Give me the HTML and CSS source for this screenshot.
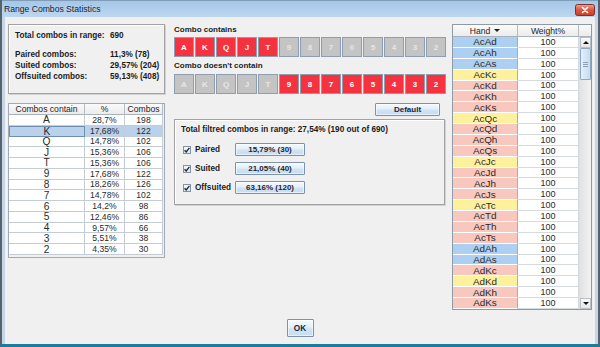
FILE: index.html
```html
<!DOCTYPE html>
<html>
<head>
<meta charset="utf-8">
<title>Range Combos Statistics</title>
<link rel="stylesheet" href="styles.css">
</head>
<body>
<div class="window">
  <div class="titlebar">
    <span class="title">Range Combos Statistics</span>
    <span class="close">
      <svg width="20" height="12" viewBox="0 0 20 12">
        <defs>
          <linearGradient id="cg" x1="0" y1="0" x2="0" y2="1">
            <stop offset="0" stop-color="#eca394"/>
            <stop offset="0.45" stop-color="#dc5a44"/>
            <stop offset="1" stop-color="#cc3e2a"/>
          </linearGradient>
        </defs>
        <rect x="0.5" y="0.5" width="19" height="11" rx="2" fill="url(#cg)" stroke="#80302a"/>
        <path d="M7.5 3.5 L12.5 8.5 M12.5 3.5 L7.5 8.5" stroke="#fff" stroke-width="1.6" stroke-linecap="round"/>
      </svg>
    </span>
  </div>
  <div class="client">
    <div class="main">
      <div class="col-left">
        <div class="stats">
          <div class="srow first"><span class="sk">Total combos in range:</span><span class="sv">690</span></div>
          <div class="srow"><span class="sk">Paired combos:</span><span class="sv">11,3% (78)</span></div>
          <div class="srow"><span class="sk">Suited combos:</span><span class="sv">29,57% (204)</span></div>
          <div class="srow"><span class="sk">Offsuited combos:</span><span class="sv">59,13% (408)</span></div>
        </div>
        <div class="ltable">
          <div class="lgrid">
            <div class="lh">Combos contain</div><div class="lh">%</div><div class="lh">Combos</div>
            <div class="lc rank">A</div><div class="lc">28,7%</div><div class="lc">198</div>
            <div class="lc rank sel focus">K</div><div class="lc sel">17,68%</div><div class="lc sel">122</div>
            <div class="lc rank">Q</div><div class="lc">14,78%</div><div class="lc">102</div>
            <div class="lc rank">J</div><div class="lc">15,36%</div><div class="lc">106</div>
            <div class="lc rank">T</div><div class="lc">15,36%</div><div class="lc">106</div>
            <div class="lc rank">9</div><div class="lc">17,68%</div><div class="lc">122</div>
            <div class="lc rank">8</div><div class="lc">18,26%</div><div class="lc">126</div>
            <div class="lc rank">7</div><div class="lc">14,78%</div><div class="lc">102</div>
            <div class="lc rank">6</div><div class="lc">14,2%</div><div class="lc">98</div>
            <div class="lc rank">5</div><div class="lc">12,46%</div><div class="lc">86</div>
            <div class="lc rank">4</div><div class="lc">9,57%</div><div class="lc">66</div>
            <div class="lc rank">3</div><div class="lc">5,51%</div><div class="lc">38</div>
            <div class="lc rank">2</div><div class="lc">4,35%</div><div class="lc">30</div>
          </div>
        </div>
      </div>

      <div class="col-mid">
        <div class="lbl first">Combo contains</div>
        <div class="cards">
          <span class="card on">A</span><span class="card on">K</span><span class="card on">Q</span><span class="card on">J</span><span class="card on">T</span><span class="card">9</span><span class="card">8</span><span class="card">7</span><span class="card">6</span><span class="card">5</span><span class="card">4</span><span class="card">3</span><span class="card">2</span>
        </div>
        <div class="lbl second">Combo doesn't contain</div>
        <div class="cards">
          <span class="card">A</span><span class="card">K</span><span class="card">Q</span><span class="card">J</span><span class="card">T</span><span class="card on">9</span><span class="card on">8</span><span class="card on">7</span><span class="card on">6</span><span class="card on">5</span><span class="card on">4</span><span class="card on">3</span><span class="card on">2</span>
        </div>
        <div class="defrow"><button class="btn default">Default</button></div>
        <div class="filter">
          <div class="ftitle">Total filtred combos in range: 27,54% (190 out of 690)</div>
          <div class="frow">
            <label class="chk"><span class="box"><svg width="6" height="6" viewBox="0 0 6 6"><path d="M0.6 3.2 L2.2 4.9 L5.4 0.9" fill="none" stroke="#1c2530" stroke-width="1.3"/></svg></span>Paired</label>
            <button class="btn val">15,79% (30)</button>
          </div>
          <div class="frow">
            <label class="chk"><span class="box"><svg width="6" height="6" viewBox="0 0 6 6"><path d="M0.6 3.2 L2.2 4.9 L5.4 0.9" fill="none" stroke="#1c2530" stroke-width="1.3"/></svg></span>Suited</label>
            <button class="btn val">21,05% (40)</button>
          </div>
          <div class="frow">
            <label class="chk"><span class="box"><svg width="6" height="6" viewBox="0 0 6 6"><path d="M0.6 3.2 L2.2 4.9 L5.4 0.9" fill="none" stroke="#1c2530" stroke-width="1.3"/></svg></span>Offsuited</label>
            <button class="btn val">63,16% (120)</button>
          </div>
        </div>
      </div>

      <div class="rtable">
        <div class="rhead">
          <div class="rh c1">Hand <span class="tri"></span></div>
          <div class="rh c2">Weight%</div>
          <div class="rh c3"></div>
        </div>
        <div class="rbody">
          <div class="rrows">
            <div class="hc p">AcAd</div><div class="wc">100</div>
            <div class="hc p">AcAh</div><div class="wc">100</div>
            <div class="hc p">AcAs</div><div class="wc">100</div>
            <div class="hc s">AcKc</div><div class="wc">100</div>
            <div class="hc o">AcKd</div><div class="wc">100</div>
            <div class="hc o">AcKh</div><div class="wc">100</div>
            <div class="hc o">AcKs</div><div class="wc">100</div>
            <div class="hc s">AcQc</div><div class="wc">100</div>
            <div class="hc o">AcQd</div><div class="wc">100</div>
            <div class="hc o">AcQh</div><div class="wc">100</div>
            <div class="hc o">AcQs</div><div class="wc">100</div>
            <div class="hc s">AcJc</div><div class="wc">100</div>
            <div class="hc o">AcJd</div><div class="wc">100</div>
            <div class="hc o">AcJh</div><div class="wc">100</div>
            <div class="hc o">AcJs</div><div class="wc">100</div>
            <div class="hc s">AcTc</div><div class="wc">100</div>
            <div class="hc o">AcTd</div><div class="wc">100</div>
            <div class="hc o">AcTh</div><div class="wc">100</div>
            <div class="hc o">AcTs</div><div class="wc">100</div>
            <div class="hc p">AdAh</div><div class="wc">100</div>
            <div class="hc p">AdAs</div><div class="wc">100</div>
            <div class="hc o">AdKc</div><div class="wc">100</div>
            <div class="hc s">AdKd</div><div class="wc">100</div>
            <div class="hc o">AdKh</div><div class="wc">100</div>
            <div class="hc o">AdKs</div><div class="wc">100</div>
          </div>
          <div class="vscroll">
            <div class="sbtn"><span class="up"></span></div>
            <div class="thumb"><span class="grip"></span></div>
            <div class="track"></div>
            <div class="sbtn"><span class="down"></span></div>
          </div>
        </div>
      </div>
    </div>
    <div class="footer"><button class="btn ok">OK</button></div>
  </div>
</div>
</body>
</html>
```

FILE: styles.css
```css
* { box-sizing: border-box; margin: 0; padding: 0; }
html, body { width: 600px; height: 347px; overflow: hidden; }
body { font-family: "Liberation Sans", Arial, sans-serif; color: #1e1e1e; background: #1b7c9c; }

.window {
  width: 600px; height: 347px;
  display: flex; flex-direction: column;
  border-left: 2px solid #56626e;
  border-right: 2px solid #56626e;
  border-bottom: 3px solid #1b7c9c;
  background: #c6d6e6;
}

.titlebar {
  height: 17px; flex: none;
  display: flex; align-items: center; justify-content: space-between;
  background: linear-gradient(#a6c7e8, #bcd6ef);
  border-top: 1px solid #7f9cb8;
}
.title { font-size: 8.6px; color: #14263a; padding-left: 2px; }
.close { display: flex; margin-right: 3px; margin-top: 2px; }

.client {
  flex: 1; margin: 0 3px;
  background: #f0f0f0;
  padding: 7px 3px 0 3px;
  display: flex; flex-direction: column;
}

.main { display: flex; align-items: flex-start; }

/* left column */
.col-left { width: 157px; flex: none; display: flex; flex-direction: column; }
.stats {
  height: 70px;
  border: 1px solid #a2a2a2;
  box-shadow: inset 1px 1px #ffffff, 1px 1px #d2d2d2;
  padding: 4.5px 0 0 6px;
  font-size: 8.2px; font-weight: bold; color: #1c1c1c;
}
.srow { display: flex; height: 11px; line-height: 11px; }
.srow.first { margin-bottom: 8px; }
.sk { width: 95px; flex: none; }

.ltable {
  margin-top: 9px; height: 155px;
  border: 1px solid #a0aab4;
  background: #f0f0f0;
}
.lgrid {
  display: grid;
  grid-template-columns: 76px 40px 38px;
  grid-template-rows: 11px;
  grid-auto-rows: 10.77px;
  background: #fff;
  width: 154px;
}
.lh {
  background: linear-gradient(#fafafa, #ececec);
  border-right: 1px solid #b4bcc6; border-bottom: 1px solid #a8b2bc;
  font-size: 8.6px; color: #262626;
  display: flex; align-items: center; justify-content: center;
}
.lc {
  border-right: 1px solid #c4ccd6; border-bottom: 1px solid #c4ccd6;
  font-size: 8.6px; color: #2a2a2a;
  display: flex; align-items: center; justify-content: center;
}
.lc.rank { font-size: 10.2px; }
.lc.sel { background: #b9d1ea; }
.lc.focus { border: 1px solid #6f8fb0; }

/* middle column */
.col-mid { width: 273px; flex: none; margin-left: 9px; display: flex; flex-direction: column; }
.lbl { font-size: 8px; font-weight: bold; color: #1c1c1c; }
.lbl.first { height: 13px; line-height: 11px; }
.lbl.second { height: 17px; padding-top: 3px; line-height: 12px; }
.cards { display: flex; gap: 1px; height: 20px; }
.card {
  width: 20px; height: 20px;
  border: 1px solid #8e9eae;
  background: #c4c4c4;
  color: #e6e6e6;
  font-size: 8px; font-weight: bold;
  display: flex; align-items: center; justify-content: center;
}
.card.on { background: #f5323f; color: #ffffff; }

.btn {
  font-family: "Liberation Sans", Arial, sans-serif;
  font-weight: bold; font-size: 8px; color: #1a2634;
  border: 1px solid #7b93ab;
  border-radius: 1px;
  background: linear-gradient(#f4f9fd 0%, #e4eff9 45%, #d0e3f5 55%, #c6dcf2 100%);
  box-shadow: inset 0 0 0 1px rgba(255,255,255,0.55);
  display: flex; align-items: center; justify-content: center;
}
.defrow { display: flex; justify-content: flex-end; padding-right: 7px; margin-top: 9px; }
.btn.default { width: 65px; height: 13px; }

.filter {
  margin-top: 3px; width: 271px; height: 86px;
  border: 1px solid #a2a2a2;
  box-shadow: inset 1px 1px #ffffff, 1px 1px #d2d2d2;
  padding: 4px 0 0 8px;
  display: flex; flex-direction: column; gap: 6px;
}
.ftitle { font-size: 8.2px; font-weight: bold; color: #1c1c1c; line-height: 12px; height: 12px; margin-left: -2px; margin-bottom: 1px; }
.frow { display: flex; align-items: center; height: 13px; }
.chk {
  width: 52px; flex: none;
  display: flex; align-items: center; gap: 4px;
  font-size: 8.2px; font-weight: bold; color: #1c1c1c;
}
.box {
  width: 8px; height: 8px; flex: none;
  border: 1px solid #8293a6;
  background: linear-gradient(#f6f8fa, #dfe5eb);
  display: flex; align-items: center; justify-content: center;
}
.btn.val { width: 70px; height: 13px; }

/* right table */
.rtable {
  width: 140px; height: 286px; flex: none; margin-left: 5px;
  border: 1px solid #8d9aa8;
  background: #fff;
  display: flex; flex-direction: column;
}
.rhead { display: flex; height: 12px; flex: none; }
.rh {
  height: 12px;
  background: linear-gradient(#fbfbfb, #ebebeb);
  border-bottom: 1px solid #a8b2bc; border-right: 1px solid #b4bcc6;
  font-size: 8.6px; color: #262626;
  display: flex; align-items: center; justify-content: center; gap: 3px;
}
.rh.c1 { width: 65px; }
.rh.c2 { width: 61px; }
.rh.c3 { width: 12px; border-right: none; }
.tri { width: 0; height: 0; border-left: 3px solid transparent; border-right: 3px solid transparent; border-top: 3px solid #1e1e1e; margin-left: 1px; }

.rbody { flex: 1; display: flex; }
.rrows {
  display: grid;
  grid-template-columns: 65px 61px;
  grid-auto-rows: 10.88px;
}
.hc, .wc {
  display: flex; align-items: center; justify-content: center;
  border-bottom: 1px solid #ffffff;
  color: #2a2a2a;
}
.hc { font-size: 9.9px; border-right: 1px solid #a4aeb8; }
.wc { font-size: 9px; border-bottom-color: #d4dae0; border-right: 1px solid #d4dae0; }
.hc.p { background: #add0f2; }
.hc.s { background: #fdf19d; }
.hc.o { background: #f8c7bd; }

.vscroll { width: 12px; display: flex; flex-direction: column; background: #ececec; border-left: 1px solid #e0e0e0; }
.sbtn {
  height: 11px; flex: none;
  background: linear-gradient(#fafafa, #e6e6e6);
  border: 1px solid #b8c0c8;
  display: flex; align-items: center; justify-content: center;
}
.up { width: 0; height: 0; border-left: 3px solid transparent; border-right: 3px solid transparent; border-bottom: 3px solid #111; }
.down { width: 0; height: 0; border-left: 3px solid transparent; border-right: 3px solid transparent; border-top: 3px solid #111; }
.thumb {
  height: 32px; flex: none;
  background: linear-gradient(to right, #e4f0fb, #c7dcf1);
  border: 1px solid #8ea8c2; border-radius: 1px;
  display: flex; align-items: center; justify-content: center;
}
.grip { width: 5px; height: 5px; border-top: 1px solid #8aa2ba; border-bottom: 1px solid #8aa2ba; background: linear-gradient(transparent 1px, #8aa2ba 1px, #8aa2ba 2px, transparent 2px); }
.track { flex: 1; background: linear-gradient(to right, #e2e2e2, #f2f2f2); }

/* footer */
.footer { display: flex; justify-content: center; margin-top: 9px; }
.btn.ok { width: 27px; height: 18px; font-size: 8.2px; }
```
